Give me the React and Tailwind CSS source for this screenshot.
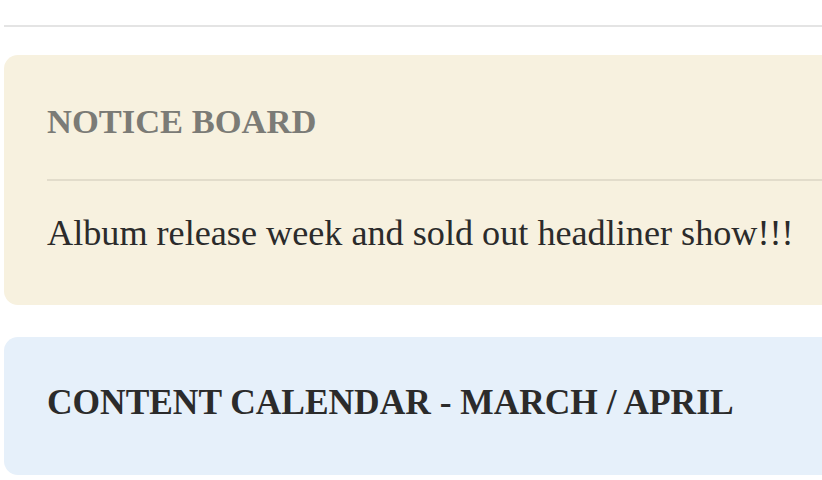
export default function App() {
  return (
    <div className="h-[480px] w-full overflow-hidden bg-white font-['Liberation_Serif',serif]">
      <div className="w-[860px] pl-[4px]">
        {/* top rule */}
        <div className="mt-[25px] h-[2px] bg-[#e4e4e4]" />

        {/* Notice board */}
        <section className="mt-[28px] rounded-l-[14px] bg-[#f7f1df] pl-[43px] pt-[49px] pb-[54px]">
          <h2 className="text-[34.5px] leading-[35px] font-bold text-[#7b7b76]">
            NOTICE BOARD
          </h2>
          <div className="mt-[40px] h-[2px] bg-[#e2dccb]" />
          <p className="mt-[34px] text-[36.2px] leading-[36px] text-[#2b2b2b]">
            Album release week and sold out headliner show!!!
          </p>
        </section>

        {/* Content calendar */}
        <section className="mt-[32px] rounded-l-[14px] bg-[#e6f0fa] pl-[43px] pt-[48px] pb-[55px]">
          <h2 className="text-[35.4px] leading-[35px] font-bold text-[#2b2b2b]">
            CONTENT CALENDAR - MARCH / APRIL
          </h2>
        </section>
      </div>
    </div>
  );
}
